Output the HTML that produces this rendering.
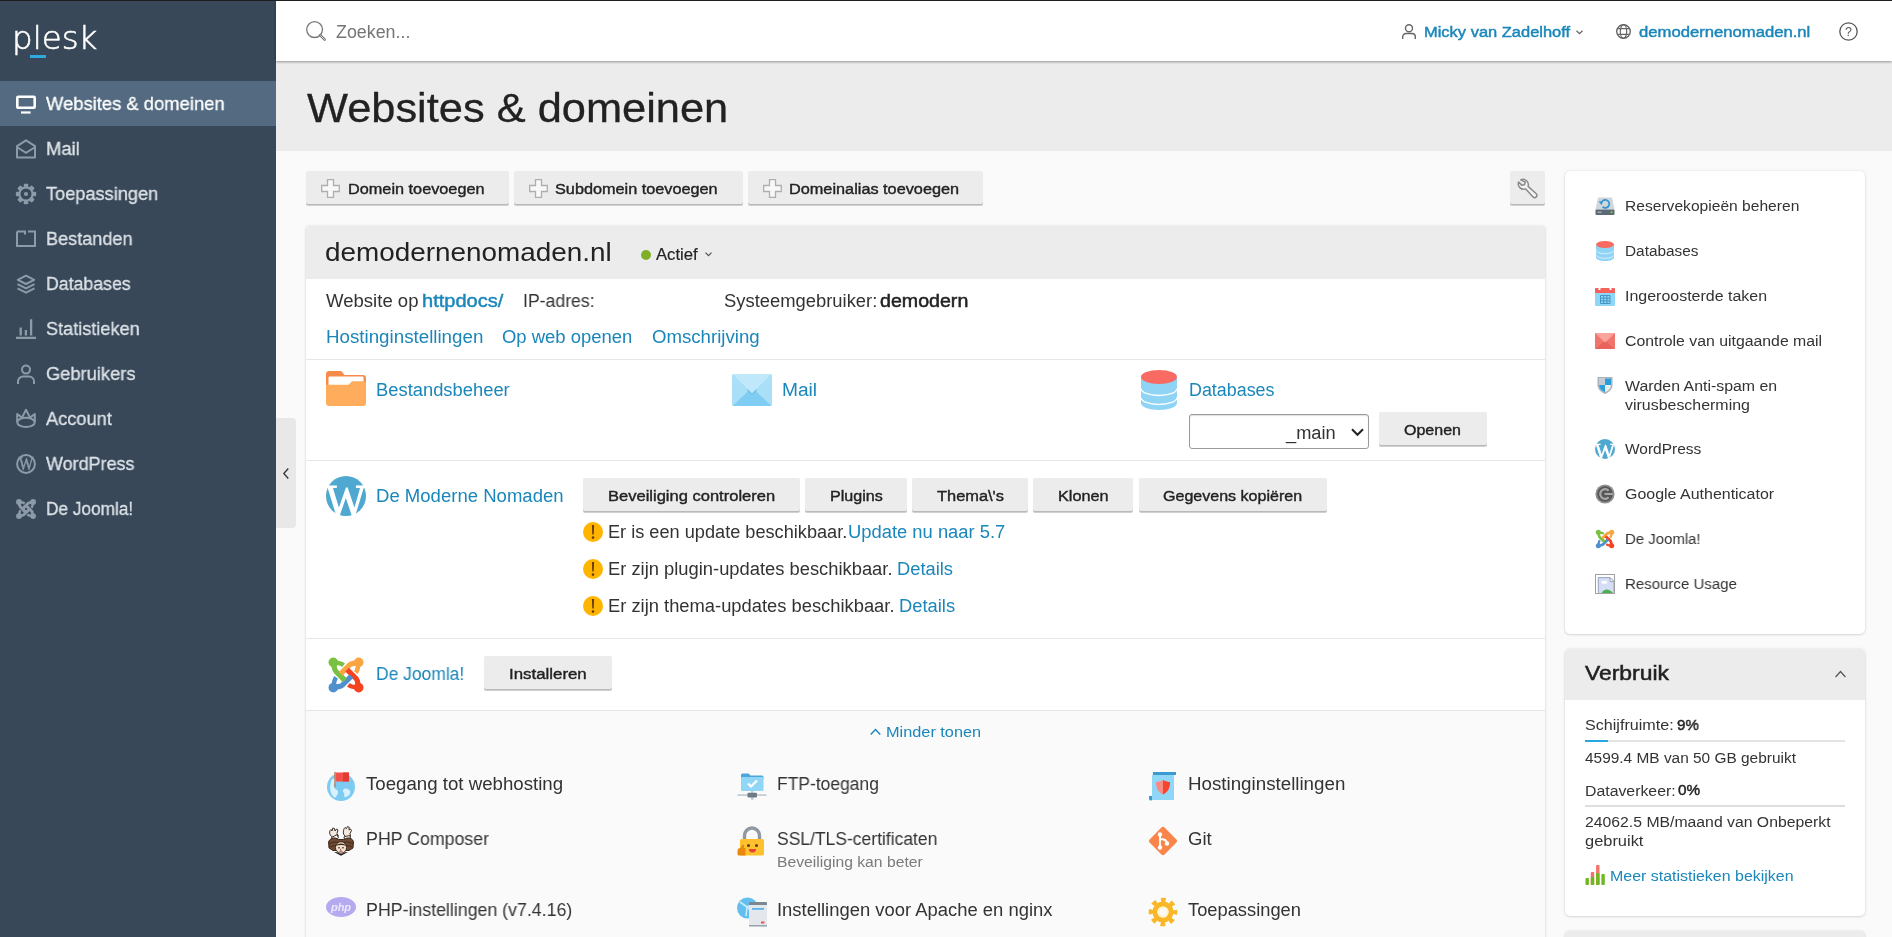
<!DOCTYPE html>
<html lang="nl">
<head>
<meta charset="utf-8">
<title>Websites &amp; domeinen - Plesk</title>
<style>
*{box-sizing:border-box;margin:0;padding:0}
html,body{width:1892px;height:937px;overflow:hidden}
body{font-family:"Liberation Sans","DejaVu Sans",sans-serif;font-size:17.5px;color:#222;background:#fafafa;position:relative}
.abs{position:absolute}
svg{display:block;overflow:visible;will-change:transform}
.tx{position:absolute;white-space:nowrap;display:block;transform-origin:0 50%;will-change:transform}
a{color:#1a86ba;text-decoration:none}
#topline{position:absolute;left:0;top:0;width:1892px;height:1px;background:#1e1e1e;z-index:50}
#side{position:absolute;left:0;top:0;width:276px;height:937px;background:#384859;color:#dde2e7}
.nav{position:absolute;left:0;width:276px;height:45px;color:#dde2e7}
.nav.on{background:#536a80;color:#fff}
.nav svg{color:#8d9aa7}
.nav.on svg{color:#fff}
#handle{position:absolute;left:276px;top:418px;width:20px;height:110px;background:#e8e8e8;border-radius:0 4px 4px 0}
#top{position:absolute;left:276px;top:1px;width:1616px;height:59.5px;background:#fff;box-shadow:0 1px 2.5px rgba(0,0,0,.38);z-index:5}
#titlebar{position:absolute;left:276px;top:60px;width:1616px;height:91px;background:#ececec}
.btn{position:absolute;height:34px;background:#ececec;border-radius:2px;box-shadow:inset 0 -1px 0 #b9b9b9,0 1px 0 #cfcfcf}
.panel{position:absolute;background:#fff;border-radius:3px;box-shadow:0 0 3px rgba(0,0,0,.11),0 1px 2.5px rgba(0,0,0,.1)}
.sep{position:absolute;left:306px;width:1239px;height:1px;background:#e6e6e6}
</style>
</head>
<body>
<div id="topline"></div>
<div id="side">
<span class="tx" id="logo" style="left:12.4px;top:14.5px;font-family:'DejaVu Sans',sans-serif;font-weight:200;font-size:32.5px;line-height:46px;color:#fff;letter-spacing:0.0px;-webkit-text-stroke:0.55px #fff">plesk</span>
<div class="abs" style="left:30px;top:55px;width:15.5px;height:3px;background:#2eaadc"></div>
<div class="nav on" style="top:81px">
<svg class="abs" style="left:16px;top:12.5px;" width="20" height="20" viewBox="0 0 20 20"><rect x="1.3" y="2.8" width="17.4" height="11" rx="1" fill="none" stroke="currentColor" stroke-width="2.6"/><path d="M5 18.5h9.6" fill="none" stroke="currentColor" stroke-width="2.2"/></svg>
<span id="t1" class="tx" style="left:46.1px;top:10.6px;font-size:19.12px;line-height:24px;-webkit-text-stroke:0.3px currentColor;transform:scaleX(0.9626);">Websites &amp; domeinen</span>
</div>
<div class="nav" style="top:126px">
<svg class="abs" style="left:16px;top:13px;" width="20" height="20" viewBox="0 0 20 20"><path d="M1 18.5V7.2L10 1.3l9 5.9V18.5z" fill="none" stroke="currentColor" stroke-width="2" stroke-linejoin="round"/><path d="M1.5 8.5L10 13.8l8.5-5.3" fill="none" stroke="currentColor" stroke-width="2"/></svg>
<span id="t2" class="tx" style="left:46.1px;top:10.6px;font-size:19.12px;line-height:24px;-webkit-text-stroke:0.3px currentColor;transform:scaleX(0.9646);">Mail</span>
</div>
<div class="nav" style="top:171px">
<svg class="abs" style="left:16px;top:12.5px;" width="20" height="20" viewBox="0 0 20 20"><g fill="currentColor"><rect x="7.7" y="-0.2" width="4.6" height="5" rx="1.2" transform="rotate(0 10 10)"/><rect x="7.7" y="-0.2" width="4.6" height="5" rx="1.2" transform="rotate(45 10 10)"/><rect x="7.7" y="-0.2" width="4.6" height="5" rx="1.2" transform="rotate(90 10 10)"/><rect x="7.7" y="-0.2" width="4.6" height="5" rx="1.2" transform="rotate(135 10 10)"/><rect x="7.7" y="-0.2" width="4.6" height="5" rx="1.2" transform="rotate(180 10 10)"/><rect x="7.7" y="-0.2" width="4.6" height="5" rx="1.2" transform="rotate(225 10 10)"/><rect x="7.7" y="-0.2" width="4.6" height="5" rx="1.2" transform="rotate(270 10 10)"/><rect x="7.7" y="-0.2" width="4.6" height="5" rx="1.2" transform="rotate(315 10 10)"/></g><circle cx="10" cy="10" r="7.6" fill="currentColor"/><circle cx="10" cy="10" r="5.5" fill="#384859"/><circle cx="10" cy="10" r="2.1" fill="currentColor"/></svg>
<span id="t3" class="tx" style="left:46.1px;top:10.6px;font-size:19.12px;line-height:24px;-webkit-text-stroke:0.3px currentColor;transform:scaleX(0.9514);">Toepassingen</span>
</div>
<div class="nav" style="top:216px">
<svg class="abs" style="left:16px;top:13px;" width="20" height="20" viewBox="0 0 20 20"><path d="M1 2.5h8v3M1 2.5V17h18V5.5M12 2.5h7v3" fill="none" stroke="currentColor" stroke-width="2"/><path d="M9 5.5h3" stroke="currentColor" stroke-width="2" opacity="0"/></svg>
<span id="t4" class="tx" style="left:46.1px;top:10.6px;font-size:19.12px;line-height:24px;-webkit-text-stroke:0.3px currentColor;transform:scaleX(0.9476);">Bestanden</span>
</div>
<div class="nav" style="top:261px">
<svg class="abs" style="left:16px;top:13px;" width="20" height="20" viewBox="0 0 20 20"><path d="M10 1.6l8.2 4.2L10 10 1.8 5.8z" fill="none" stroke="currentColor" stroke-width="2" stroke-linejoin="round"/><path d="M1.5 10.2L10 14.5l8.5-4.3M1.5 14.3L10 18.6l8.5-4.3" fill="none" stroke="currentColor" stroke-width="2"/></svg>
<span id="t5" class="tx" style="left:46.1px;top:10.6px;font-size:19.12px;line-height:24px;-webkit-text-stroke:0.3px currentColor;transform:scaleX(0.9272);">Databases</span>
</div>
<div class="nav" style="top:306px">
<svg class="abs" style="left:16px;top:13.2px;" width="20" height="20" viewBox="0 0 20 20"><path d="M0 18.800h20M4.700 16.500v-8M9.900 16.500v-5.500M15.100 16.500V0.300" fill="none" stroke="currentColor" stroke-width="2.300"/></svg>
<span id="t6" class="tx" style="left:46.1px;top:10.6px;font-size:19.12px;line-height:24px;-webkit-text-stroke:0.3px currentColor;transform:scaleX(0.9485);">Statistieken</span>
</div>
<div class="nav" style="top:351px">
<svg class="abs" style="left:16px;top:13.4px;" width="20" height="20" viewBox="0 0 20 20"><circle cx="10" cy="5.6" r="4" fill="none" stroke="currentColor" stroke-width="2"/><path d="M2 20v-2.5a5 5 0 0 1 5-5h6a5 5 0 0 1 5 5V20" fill="none" stroke="currentColor" stroke-width="2"/></svg>
<span id="t7" class="tx" style="left:46.1px;top:10.6px;font-size:19.12px;line-height:24px;-webkit-text-stroke:0.3px currentColor;transform:scaleX(0.9576);">Gebruikers</span>
</div>
<div class="nav" style="top:396px">
<svg class="abs" style="left:16px;top:12.3px;" width="20" height="20" viewBox="0 0 20 20"><path d="M1.200 14V6l4.800 3.600L10 1.800l4 7.800L18.800 6v8" fill="none" stroke="currentColor" stroke-width="2" stroke-linejoin="round"/><ellipse cx="10" cy="14.300" rx="8.800" ry="4.600" fill="none" stroke="currentColor" stroke-width="2"/></svg>
<span id="t8" class="tx" style="left:46.1px;top:10.6px;font-size:19.12px;line-height:24px;-webkit-text-stroke:0.3px currentColor;transform:scaleX(0.9543);">Account</span>
</div>
<div class="nav" style="top:441px">
<svg class="abs" style="left:16px;top:13px;" width="20" height="20" viewBox="0 0 20 20"><circle cx="10" cy="10" r="8.900" fill="none" stroke="currentColor" stroke-width="2"/><text x="10" y="16.300" text-anchor="middle" font-family="Liberation Serif,serif" font-weight="400" font-size="19" fill="currentColor" stroke="currentColor" stroke-width="0.500" letter-spacing="0" transform="translate(10 0) scale(0.820 1) translate(-10 0)">W</text></svg>
<span id="t9" class="tx" style="left:46.1px;top:10.6px;font-size:19.12px;line-height:24px;-webkit-text-stroke:0.3px currentColor;transform:scaleX(0.9398);">WordPress</span>
</div>
<div class="nav" style="top:486px">
<svg class="abs" style="left:16px;top:13px;" width="20" height="20" viewBox="0 0 20 20"><g transform="scale(0.5556)"><g fill="none" stroke-width="5.2" stroke-linejoin="round"><path d="M5.30 5.30L11.80 6.40Q13.80 6.80 15.60 8.20" stroke="currentColor" stroke-width="4.42"/><path d="M30.70 5.30L29.60 11.80Q29.20 13.80 27.80 15.60" stroke="currentColor" stroke-width="4.42"/><path d="M30.70 30.70L24.20 29.60Q22.20 29.20 20.40 27.80" stroke="currentColor" stroke-width="4.42"/><path d="M5.30 30.70L6.40 24.20Q6.80 22.20 8.20 20.40" stroke="currentColor" stroke-width="4.42"/><path d="M5.30 5.30L6.60 11.60Q6.90 13.40 8.00 14.50L16.90 23.40" stroke="currentColor"/><path d="M30.70 5.30L24.40 6.60Q22.60 6.90 21.50 8.00L12.60 16.90" stroke="currentColor"/><path d="M30.70 30.70L29.40 24.40Q29.10 22.60 28.00 21.50L19.10 12.60" stroke="currentColor"/><path d="M5.30 30.70L11.60 29.40Q13.40 29.10 14.50 28.00L23.40 19.10" stroke="currentColor"/><path d="M13.50 20.00L16.90 23.40" stroke="currentColor"/></g><circle cx="5.3" cy="5.3" r="5.2" fill="currentColor"/><circle cx="30.7" cy="5.3" r="5.2" fill="currentColor"/><circle cx="30.7" cy="30.7" r="5.2" fill="currentColor"/><circle cx="5.3" cy="30.7" r="5.2" fill="currentColor"/></g></svg>
<span id="t10" class="tx" style="left:46.1px;top:10.6px;font-size:19.12px;line-height:24px;-webkit-text-stroke:0.3px currentColor;transform:scaleX(0.9022);">De Joomla!</span>
</div>
</div>
<div id="handle"><svg class="abs" style="left:6.5px;top:49.5px;" width="6" height="11" viewBox="0 0 6 11"><path d="M5.300 0.500L0.800 5.500l4.500 5" fill="none" stroke="#333" stroke-width="1.300"/></svg></div>
<div id="top"></div>
<div class="abs" style="left:0;top:0;z-index:6">
<svg class="abs" style="left:306px;top:21px;" width="20" height="20" viewBox="0 0 20 20"><circle cx="8.600" cy="8.600" r="7.900" fill="none" stroke="#777" stroke-width="1.300"/><path d="M14.200 14.200l4.500 4.500" stroke="#777" stroke-width="2.600" stroke-linecap="round"/><path d="M14.600 14.600l4 4" stroke="#fff" stroke-width="0.700" stroke-linecap="round"/></svg>
<span id="t11" class="tx" style="left:335.7px;top:21.1px;font-size:17.85px;line-height:23px;color:#757575;transform:scaleX(0.9963);">Zoeken...</span>
<svg class="abs" style="left:1401.5px;top:24px;" width="14" height="15" viewBox="0 0 14 15"><circle cx="7" cy="4.200" r="3.500" fill="none" stroke="#666" stroke-width="1.400"/><path d="M0.700 15v-2.200a3.300 3.300 0 0 1 3.300-3.300h6a3.300 3.300 0 0 1 3.300 3.300V15" fill="none" stroke="#666" stroke-width="1.400"/></svg>
<a id="t12" class="tx" style="left:1423.7px;top:21.9px;font-size:15.10px;line-height:19px;color:#1a86ba;-webkit-text-stroke:0.45px currentColor;transform:scaleX(1.0908);">Micky van Zadelhoff</a>
<svg class="abs" style="left:1576px;top:30.3px;" width="7" height="5" viewBox="0 0 7 5"><path d="M0.500 0.700l3 3 3-3" fill="none" stroke="#666" stroke-width="1.300"/></svg>
<svg class="abs" style="left:1616px;top:24px;" width="15" height="15" viewBox="0 0 15 15"><circle cx="7.500" cy="7.500" r="6.800" fill="none" stroke="#666" stroke-width="1.400"/><ellipse cx="7.500" cy="7.500" rx="3.200" ry="6.800" fill="none" stroke="#666" stroke-width="1.200"/><path d="M1.500 4.600h12M1.500 10.400h12" stroke="#666" stroke-width="1.200"/></svg>
<a id="t13" class="tx" style="left:1638.8px;top:21.9px;font-size:15.10px;line-height:19px;color:#1a86ba;-webkit-text-stroke:0.45px currentColor;transform:scaleX(1.1034);">demodernenomaden.nl</a>
<svg class="abs" style="left:1839px;top:22px;" width="19" height="19" viewBox="0 0 19 19"><circle cx="9.500" cy="9.500" r="8.700" fill="none" stroke="#555" stroke-width="1.300"/><text x="9.500" y="14" text-anchor="middle" font-family="Liberation Sans,sans-serif" font-size="12.500" fill="#555">?</text></svg>
</div>
<div id="titlebar"></div>
<h1 id="t14" class="tx" style="left:306.6px;top:81.6px;font-size:39.98px;line-height:52px;color:#222;font-weight:400;-webkit-text-stroke:0.3px currentColor;transform:scaleX(1.0855);">Websites &amp; domeinen</h1>
<div class="btn" style="left:306px;top:171px;width:202.5px"></div><svg class="abs" style="left:321px;top:179.3px;" width="19" height="19" viewBox="0 0 19 19"><path d="M6.5 0.7h6v5.8h5.8v6h-5.8v5.8h-6v-5.8H0.7v-6h5.8z" fill="#f8f8f8" stroke="#aeaeae" stroke-width="1.3"/></svg><span id="t15" class="tx" style="left:347.8px;top:178.7px;font-size:15.50px;line-height:20px;color:#222;-webkit-text-stroke:0.4px currentColor;transform:scaleX(1.0493);">Domein toevoegen</span>
<div class="btn" style="left:514.3px;top:171px;width:228.3px"></div><svg class="abs" style="left:529px;top:179.3px;" width="19" height="19" viewBox="0 0 19 19"><path d="M6.5 0.7h6v5.8h5.8v6h-5.8v5.8h-6v-5.8H0.7v-6h5.8z" fill="#f8f8f8" stroke="#aeaeae" stroke-width="1.3"/></svg><span id="t16" class="tx" style="left:555.2px;top:178.7px;font-size:15.50px;line-height:20px;color:#222;-webkit-text-stroke:0.4px currentColor;transform:scaleX(1.0484);">Subdomein toevoegen</span>
<div class="btn" style="left:748.3px;top:171px;width:235.2px"></div><svg class="abs" style="left:763px;top:179.3px;" width="19" height="19" viewBox="0 0 19 19"><path d="M6.5 0.7h6v5.8h5.8v6h-5.8v5.8h-6v-5.8H0.7v-6h5.8z" fill="#f8f8f8" stroke="#aeaeae" stroke-width="1.3"/></svg><span id="t17" class="tx" style="left:789.2px;top:178.7px;font-size:15.50px;line-height:20px;color:#222;-webkit-text-stroke:0.4px currentColor;transform:scaleX(1.0502);">Domeinalias toevoegen</span>
<div class="btn" style="left:1510px;top:171px;width:35px"></div>
<svg class="abs" style="left:1517px;top:177.8px;" width="21" height="21" viewBox="0 0 18 18"><path d="M3.2 1.6a4.6 4.6 0 0 1 6.3 5.6l7 6.3a1.9 1.9 0 0 1-2.7 2.7L7.3 9.3A4.6 4.6 0 0 1 1.4 3.4l2.9 2.9 2.2-0.6 0.6-2.2z" fill="#f4f4f4" stroke="#8a8a8a" stroke-width="1.3" stroke-linejoin="round"/></svg>
<div class="panel" style="left:306px;top:226px;width:1239px;height:730px;background:#fafafa"></div>
<div class="abs" style="left:306px;top:226px;width:1239px;height:52.5px;background:#ececec;border-radius:3px 3px 0 0"></div>
<div class="abs" style="left:306px;top:278.5px;width:1239px;height:432px;background:#fff"></div>
<span id="t18" class="tx" style="left:325.3px;top:236.2px;font-size:25.81px;line-height:33px;color:#222;transform:scaleX(1.0802);">demodernenomaden.nl</span>
<div class="abs" style="left:641px;top:249.5px;width:10px;height:10px;background:#80af26;border-radius:50%"></div>
<span id="t19" class="tx" style="left:656.1px;top:245.1px;font-size:15.91px;line-height:20px;color:#222;-webkit-text-stroke:0.15px currentColor;transform:scaleX(1.0475);">Actief</span>
<svg class="abs" style="left:704.6px;top:252.3px;" width="7" height="5" viewBox="0 0 7 5"><path d="M0.500 0.700l3 3 3-3" fill="none" stroke="#555" stroke-width="1.200"/></svg>
<span id="t20" class="tx" style="left:325.6px;top:290.3px;font-size:17.85px;line-height:23px;color:#333;transform:scaleX(1.0400);">Website op</span>
<a id="t21" class="tx" style="left:422.0px;top:289.8px;font-size:17.85px;line-height:23px;color:#1a86ba;-webkit-text-stroke:0.42px currentColor;transform:scaleX(1.1228);">httpdocs/</a>
<span id="t22" class="tx" style="left:523.1px;top:290.3px;font-size:17.85px;line-height:23px;color:#333;transform:scaleX(0.9890);">IP-adres:</span>
<span id="t23" class="tx" style="left:723.5px;top:290.3px;font-size:17.85px;line-height:23px;color:#333;transform:scaleX(1.0306);">Systeemgebruiker:</span>
<b id="t24" class="tx" style="left:880.3px;top:289.7px;font-size:17.85px;line-height:23px;color:#222;font-weight:400;-webkit-text-stroke:0.5px currentColor;transform:scaleX(1.0990);">demodern</b>
<a id="t25" class="tx" style="left:325.6px;top:325.8px;font-size:17.85px;line-height:23px;color:#1a86ba;transform:scaleX(1.0503);">Hostinginstellingen</a>
<a id="t26" class="tx" style="left:502.2px;top:325.8px;font-size:17.85px;line-height:23px;color:#1a86ba;transform:scaleX(1.0342);">Op web openen</a>
<a id="t27" class="tx" style="left:652.3px;top:325.8px;font-size:17.85px;line-height:23px;color:#1a86ba;transform:scaleX(1.0435);">Omschrijving</a>
<div class="sep" style="top:359px"></div>
<svg class="abs" style="left:326px;top:371px;" width="40" height="35" viewBox="0 0 40 35"><path d="M0 3a3 3 0 0 1 3-3h11.500a2 2 0 0 1 1.600 0.800L18.500 4H37a3 3 0 0 1 3 3v10H0z" fill="#f98b4a"/><rect x="2.500" y="5.500" width="35" height="12" rx="1.200" fill="#fff"/><path d="M0 13.800h22.500l3.600-3.600H37a3 3 0 0 1 3 3V32a3 3 0 0 1-3 3H3a3 3 0 0 1-3-3z" fill="#ffad5c"/></svg>
<a id="t28" class="tx" style="left:376.0px;top:378.9px;font-size:17.85px;line-height:23px;color:#1a86ba;transform:scaleX(1.0288);">Bestandsbeheer</a>
<svg class="abs" style="left:732px;top:373.5px;" width="40" height="32" viewBox="0 0 40 32"><rect x="0" y="0" width="40" height="32" rx="1.5" fill="#a9e0f8"/><path d="M0 1l15 15L0 31z" fill="#a9e0f8"/><path d="M40 1L25 16l15 15z" fill="#a9e0f8"/><path d="M0.5 32L20 13.5 39.5 32z" fill="#7fcdf2"/><path d="M14.5 15.8h11L20 20.6z" fill="#6ab9df"/><path d="M0.5 0h39L20 19.5z" fill="#bfe9fb"/></svg>
<a id="t29" class="tx" style="left:782.0px;top:378.9px;font-size:17.85px;line-height:23px;color:#1a86ba;transform:scaleX(1.0732);">Mail</a>
<svg class="abs" style="left:1141px;top:370px;" width="36" height="40" viewBox="0 0 36 40"><path d="M0 7v26c0 3.9 8 7 18 7s18-3.1 18-7V7z" fill="#8fd3f5"/><path d="M0 18.5c0 3.9 8 7 18 7s18-3.1 18-7" fill="none" stroke="#fff" stroke-width="1.3"/><path d="M0 27.5c0 3.9 8 7 18 7s18-3.1 18-7" fill="none" stroke="#fff" stroke-width="1.3"/><ellipse cx="18" cy="7" rx="18" ry="7" fill="#f96a62"/></svg>
<a id="t30" class="tx" style="left:1189.1px;top:378.9px;font-size:17.85px;line-height:23px;color:#1a86ba;transform:scaleX(1.0023);">Databases</a>
<div class="abs" style="left:1189px;top:414px;width:180px;height:35px;background:#fff;border:1px solid #9a9a9a;border-radius:3px;box-shadow:inset 0 1px 1px rgba(0,0,0,.12)"></div>
<span id="t31" class="tx" style="left:1286.0px;top:421.5px;font-size:17.85px;line-height:23px;color:#333;transform:scaleX(1.0227);">_main</span>
<svg class="abs" style="left:1350.5px;top:427.5px;" width="13" height="9" viewBox="0 0 13 9"><path d="M1 1.200l5.500 5.600L12 1.200" fill="none" stroke="#222" stroke-width="2"/></svg>
<div class="btn" style="left:1379.3px;top:412px;width:107.700px"></div>
<span id="t32" class="tx" style="left:1404.3px;top:419.7px;font-size:15.50px;line-height:20px;color:#222;-webkit-text-stroke:0.4px currentColor;transform:scaleX(1.0320);">Openen</span>
<div class="sep" style="top:460px"></div>
<svg class="abs" style="left:326px;top:476px;" width="40" height="40" viewBox="0 0 40 40"><circle cx="20" cy="20" r="20" fill="#4fa8d0"/><text x="0" y="0" text-anchor="middle" font-family="Liberation Serif,serif" font-weight="400" font-size="47" fill="#fff" stroke="#fff" stroke-width="1.100" letter-spacing="0" transform="translate(19.800 40.600) scale(0.900 1)">W</text></svg>
<a id="t33" class="tx" style="left:376.0px;top:484.5px;font-size:17.85px;line-height:23px;color:#1a86ba;transform:scaleX(1.0392);">De Moderne Nomaden</a>
<div class="btn" style="left:583px;top:478px;width:216.8px"></div><span id="t34" class="tx" style="left:608.4px;top:485.7px;font-size:15.50px;line-height:20px;color:#222;-webkit-text-stroke:0.4px currentColor;transform:scaleX(1.0658);">Beveiliging controleren</span>
<div class="btn" style="left:805.2px;top:478px;width:101.7px"></div><span id="t35" class="tx" style="left:829.7px;top:485.7px;font-size:15.50px;line-height:20px;color:#222;-webkit-text-stroke:0.4px currentColor;transform:scaleX(1.0393);">Plugins</span>
<div class="btn" style="left:912px;top:478px;width:115.8px"></div><span id="t36" class="tx" style="left:936.6px;top:485.7px;font-size:15.50px;line-height:20px;color:#222;-webkit-text-stroke:0.4px currentColor;transform:scaleX(1.0581);">Thema\'s</span>
<div class="btn" style="left:1033.2px;top:478px;width:100.1px"></div><span id="t37" class="tx" style="left:1058.1px;top:485.7px;font-size:15.50px;line-height:20px;color:#222;-webkit-text-stroke:0.4px currentColor;transform:scaleX(1.0492);">Klonen</span>
<div class="btn" style="left:1138.6px;top:478px;width:188.4px"></div><span id="t38" class="tx" style="left:1162.6px;top:485.7px;font-size:15.50px;line-height:20px;color:#222;-webkit-text-stroke:0.4px currentColor;transform:scaleX(1.0351);">Gegevens kopi&euml;ren</span>
<svg class="abs" style="left:583px;top:522.2px;" width="20" height="20" viewBox="0 0 20 20"><circle cx="10" cy="10" r="10" fill="#ffb400"/><path d="M8.900 3h2.200l-0.350 9.600h-1.500z" fill="#6b3d00"/><circle cx="10" cy="15.600" r="1.300" fill="#6b3d00"/></svg>
<span id="t39" class="tx" style="left:608.3px;top:521.2px;font-size:17.85px;line-height:23px;color:#333;transform:scaleX(1.0179);">Er is een update beschikbaar.</span>
<a id="t40" class="tx" style="left:847.5px;top:521.2px;font-size:17.85px;line-height:23px;color:#1a86ba;transform:scaleX(1.0297);">Update nu naar 5.7</a>
<svg class="abs" style="left:583px;top:559px;" width="20" height="20" viewBox="0 0 20 20"><circle cx="10" cy="10" r="10" fill="#ffb400"/><path d="M8.900 3h2.200l-0.350 9.600h-1.500z" fill="#6b3d00"/><circle cx="10" cy="15.600" r="1.300" fill="#6b3d00"/></svg>
<span id="t41" class="tx" style="left:608.3px;top:557.7px;font-size:17.85px;line-height:23px;color:#333;transform:scaleX(1.0280);">Er zijn plugin-updates beschikbaar.</span>
<a id="t42" class="tx" style="left:897.2px;top:557.7px;font-size:17.85px;line-height:23px;color:#1a86ba;transform:scaleX(1.0269);">Details</a>
<svg class="abs" style="left:583px;top:596px;" width="20" height="20" viewBox="0 0 20 20"><circle cx="10" cy="10" r="10" fill="#ffb400"/><path d="M8.900 3h2.200l-0.350 9.600h-1.500z" fill="#6b3d00"/><circle cx="10" cy="15.600" r="1.300" fill="#6b3d00"/></svg>
<span id="t43" class="tx" style="left:608.3px;top:594.5px;font-size:17.85px;line-height:23px;color:#333;transform:scaleX(1.0280);">Er zijn thema-updates beschikbaar.</span>
<a id="t44" class="tx" style="left:899.0px;top:594.5px;font-size:17.85px;line-height:23px;color:#1a86ba;transform:scaleX(1.0287);">Details</a>
<div class="sep" style="top:638px"></div>
<svg class="abs" style="left:328.3px;top:656.8px;" width="36" height="36" viewBox="0 0 36 36"><g fill="none" stroke-width="5.3" stroke-linejoin="round"><path d="M5.30 5.30L11.80 6.40Q13.80 6.80 15.60 8.20" stroke="#7ac143" stroke-width="4.505"/><path d="M30.70 5.30L29.60 11.80Q29.20 13.80 27.80 15.60" stroke="#f9a541" stroke-width="4.505"/><path d="M30.70 30.70L24.20 29.60Q22.20 29.20 20.40 27.80" stroke="#f44321" stroke-width="4.505"/><path d="M5.30 30.70L6.40 24.20Q6.80 22.20 8.20 20.40" stroke="#5091cd" stroke-width="4.505"/><path d="M5.30 5.30L6.60 11.60Q6.90 13.40 8.00 14.50L16.90 23.40" stroke="#7ac143"/><path d="M30.70 5.30L24.40 6.60Q22.60 6.90 21.50 8.00L12.60 16.90" stroke="#f9a541"/><path d="M30.70 30.70L29.40 24.40Q29.10 22.60 28.00 21.50L19.10 12.60" stroke="#f44321"/><path d="M5.30 30.70L11.60 29.40Q13.40 29.10 14.50 28.00L23.40 19.10" stroke="#5091cd"/><path d="M13.50 20.00L16.90 23.40" stroke="#7ac143"/></g><circle cx="5.3" cy="5.3" r="4.8" fill="#7ac143"/><circle cx="30.7" cy="5.3" r="4.8" fill="#f9a541"/><circle cx="30.7" cy="30.7" r="4.8" fill="#f44321"/><circle cx="5.3" cy="30.7" r="4.8" fill="#5091cd"/></svg>
<a id="t45" class="tx" style="left:376.0px;top:662.5px;font-size:17.85px;line-height:23px;color:#1a86ba;transform:scaleX(0.9785);">De Joomla!</a>
<div class="btn" style="left:484px;top:656px;width:128px"></div><span id="t46" class="tx" style="left:509.0px;top:663.7px;font-size:15.50px;line-height:20px;color:#222;-webkit-text-stroke:0.4px currentColor;transform:scaleX(1.0870);">Installeren</span>
<div class="sep" style="top:710px"></div>
<svg class="abs" style="left:870px;top:727.2px;" width="11" height="9" viewBox="0 0 11 9"><path d="M0.700 7.500l4.800-5 4.800 5" fill="none" stroke="#1a86ba" stroke-width="1.400"/></svg>
<a id="t47" class="tx" style="left:886.1px;top:721.6px;font-size:15.30px;line-height:20px;color:#1a86ba;transform:scaleX(1.0653);">Minder tonen</a>
<svg class="abs" style="left:326px;top:771px;" width="30" height="30" viewBox="0 0 30 30"><circle cx="15" cy="16" r="14" fill="#7ccbf2"/><path d="M6 8c3-1 5 1 4 3s-3 2-2 5 4 2 4 5-2 4-3 6c-4-3-7-9-3-19zM18 18c2-1 5 0 6 2s-1 5-4 6-1-3-2-4-2-3 0-4z" fill="#d9f1fc"/><rect x="8.2" y="1" width="1.6" height="15" fill="#b98a6a"/><path d="M9.8 1.5h13v9h-13z" fill="#f4514a"/><path d="M17 1.5h6v9h-6z" fill="#e23b34"/></svg>
<span id="t48" class="tx" style="left:366.1px;top:773.2px;font-size:17.85px;line-height:23px;color:#333;transform:scaleX(1.0457);">Toegang tot webhosting</span>
<svg class="abs" style="left:737px;top:771px;" width="30" height="30" viewBox="0 0 30 30"><path d="M4 4a1.5 1.5 0 0 1 1.5-1.500h6l2 2H25a1.500 1.500 0 0 1 1.500 1.500v2H4z" fill="#4aa7d8"/><rect x="4" y="6" width="22.500" height="14" rx="1.2" fill="#8fd6f7"/><path d="M11 12.500l3 3 6-6" fill="none" stroke="#fff" stroke-width="2.2"/><rect x="14" y="20" width="2.500" height="9" fill="#c9ced3"/><rect x="0.500" y="23.200" width="29" height="1.800" fill="#c9ced3"/><rect x="10.500" y="21.800" width="9.500" height="4.600" rx="1" fill="#6d7b87"/></svg>
<span id="t49" class="tx" style="left:776.7px;top:773.2px;font-size:17.85px;line-height:23px;color:#333;transform:scaleX(0.9785);">FTP-toegang</span>
<svg class="abs" style="left:1148px;top:771px;" width="30" height="30" viewBox="0 0 30 30"><path d="M5 1h23v3H5z" fill="#3b9bd0"/><path d="M4 4h22v25H4z" fill="#8fd6f7"/><path d="M1 25h3v4a2 2 0 0 1-3-1z" fill="#3b9bd0"/><path d="M15 9c-2.500 1.500-5 2-7 2 0 6 2 10 7 12.500 5-2.500 7-6.500 7-12.500-2 0-4.500-.5-7-2z" fill="#f98a84"/><path d="M15 9c2.500 1.500 5 2 7 2 0 6-2 10-7 12.500z" fill="#f4462f"/></svg>
<span id="t50" class="tx" style="left:1187.8px;top:773.2px;font-size:17.85px;line-height:23px;color:#333;transform:scaleX(1.0503);">Hostinginstellingen</span>
<svg class="abs" style="left:326px;top:826px;" width="30" height="30" viewBox="0 0 30 30"><path d="M4.500 9.500c-1.500-2.500-1-5 0.500-6l1 1.500 0.800-3 1.700 0.500 0.500 2.500 1.500-2 1.500 1-1 3.500 1.500 2.500-4 2.500z" fill="#f2e8df" stroke="#2a1c14" stroke-width="0.900" stroke-linejoin="round"/><path d="M17.500 8c-0.500-2.500 0-5 1.500-6.500l1.500 1 1-2 1.800 0.800-0.300 2.700 1.500-1 1 1.500-1.500 3 0.500 3-4.500 1z" fill="#f2e8df" stroke="#2a1c14" stroke-width="0.900" stroke-linejoin="round"/><path d="M5.500 11.500l5.500-2.800 1.500 3-5.500 3zM18 10.800l5.800-1.300 0.700 3.300-6 1.200z" fill="#fff" stroke="#2a1c14" stroke-width="0.900" stroke-linejoin="round"/><path d="M2.500 16c1-3 4-4.500 7-4l3 1.500h5l3.500-1.500c3-0.500 6 1 6.500 4l-0.500 6-4 2.500H7l-4-2.500z" fill="#6e4a33" stroke="#2a1c14" stroke-width="0.900" stroke-linejoin="round"/><path d="M3 18c3-2 6-2.500 9-1.500M27 18c-3-2-6-2.500-9-1.500M4 21c2-1 4-1.500 6-1M26 21c-2-1-4-1.500-6-1" fill="none" stroke="#3c2718" stroke-width="0.900"/><ellipse cx="15" cy="21.500" rx="5.600" ry="5.800" fill="#f3dfcd" stroke="#2a1c14" stroke-width="0.900" stroke-linejoin="round"/><path d="M9.600 20c1.500-3.500 9.300-3.500 10.800 0-3-1.200-7.800-1.200-10.800 0z" fill="#3c2718"/><path d="M12 21.800h2M16 21.800h2" stroke="#2a1c14" stroke-width="0.900"/><path d="M14.800 22.500l-0.600 2h1.400" fill="none" stroke="#8a5a4a" stroke-width="0.700"/><path d="M13.300 25.600h3.400" stroke="#b0574a" stroke-width="0.800"/><path d="M8 26l7 3.800 7-3.800-3 0.300-4 2-4-2z" fill="#1c1c1c"/></svg>
<span id="t51" class="tx" style="left:366.1px;top:827.9px;font-size:17.85px;line-height:23px;color:#333;transform:scaleX(0.9949);">PHP Composer</span>
<svg class="abs" style="left:737px;top:826px;" width="30" height="30" viewBox="0 0 30 30"><path d="M7.500 14V9.500a7.500 7.500 0 0 1 15 0V14" fill="none" stroke="#8e99a3" stroke-width="3.400"/><rect x="3" y="13" width="24" height="16.500" rx="1.500" fill="#ffc02e"/><circle cx="11.500" cy="19.500" r="1.500" fill="#5a3a10"/><circle cx="19.500" cy="19.500" r="1.500" fill="#5a3a10"/><path d="M12 23h7a3.500 3.500 0 0 1-7 0z" fill="#e8413a"/><path d="M0.500 25a3 3 0 0 1 3-3l2-3.500c1.500 0 2 1.500 1.200 3.500h1.800v7.500H2a1.500 1.500 0 0 1-1.500-1.500z" fill="#e9880c"/></svg>
<span id="t52" class="tx" style="left:776.7px;top:827.9px;font-size:17.85px;line-height:23px;color:#333;transform:scaleX(0.9797);">SSL/TLS-certificaten</span>
<svg class="abs" style="left:1148px;top:826px;" width="30" height="30" viewBox="0 0 30 30"><rect x="4.400" y="4.400" width="21.200" height="21.200" rx="2.200" fill="#f8854a" transform="rotate(45 15 15)"/><path d="M12 8.500v13M12 13c5 0 7 2 7 4.500" fill="none" stroke="#fff" stroke-width="1.800"/><circle cx="12" cy="8.500" r="2.200" fill="#fff"/><circle cx="12" cy="21.500" r="2.200" fill="#fff"/><circle cx="19" cy="17.500" r="2.200" fill="#fff"/></svg>
<span id="t53" class="tx" style="left:1187.8px;top:827.9px;font-size:17.85px;line-height:23px;color:#333;transform:scaleX(1.0395);">Git</span>
<svg class="abs" style="left:326px;top:892px;" width="30" height="30" viewBox="0 0 30 30"><ellipse cx="15" cy="15" rx="15" ry="10" fill="#b5a9ef"/><text x="15" y="18.700" text-anchor="middle" font-family="Liberation Sans,sans-serif" font-style="italic" font-weight="700" font-size="11" fill="#ece8fc" letter-spacing="0">php</text></svg>
<span id="t54" class="tx" style="left:366.1px;top:898.9px;font-size:17.85px;line-height:23px;color:#333;transform:scaleX(0.9953);">PHP-instellingen (v7.4.16)</span>
<svg class="abs" style="left:737px;top:896.5px;" width="30" height="30" viewBox="0 0 30 30"><circle cx="10.500" cy="11" r="10.500" fill="#62bff0"/><path d="M3 5l7 5-1 9M10 10l9-4M10 10l7 7" fill="none" stroke="#c9ebfb" stroke-width="1.600"/><rect x="12" y="5" width="18" height="24.500" rx="1" fill="#e4e8ec"/><path d="M12 6a1 1 0 0 1 1-1h16a1 1 0 0 1 1 1v2H12z" fill="#7b8791"/><rect x="15" y="11" width="12" height="1.800" fill="#58b4e6"/><rect x="24" y="24.500" width="3.400" height="2" fill="#f4514a"/><rect x="12" y="28" width="18" height="1.500" fill="#9aa5ae"/></svg>
<span id="t55" class="tx" style="left:776.7px;top:898.9px;font-size:17.85px;line-height:23px;color:#333;transform:scaleX(1.0324);">Instellingen voor Apache en nginx</span>
<svg class="abs" style="left:1148px;top:896.5px;" width="30" height="30" viewBox="0 0 30 30"><circle cx="15" cy="15" r="11.300" fill="none" stroke="#f9b727" stroke-width="6" stroke-dasharray="4.400 4.475" stroke-dashoffset="2.200"/><circle cx="15" cy="15" r="8" fill="none" stroke="#f9b727" stroke-width="5"/><circle cx="15" cy="15" r="5.600" fill="#fff3cf"/><circle cx="15" cy="15" r="3.400" fill="#fafafa"/></svg>
<span id="t56" class="tx" style="left:1187.8px;top:898.9px;font-size:17.85px;line-height:23px;color:#333;transform:scaleX(1.0253);">Toepassingen</span>
<span id="t57" class="tx" style="left:777.0px;top:852.4px;font-size:15.30px;line-height:20px;color:#7a7a7a;transform:scaleX(1.0261);">Beveiliging kan beter</span>
<div class="panel" style="left:1565px;top:171px;width:300px;height:463px;border-radius:5px"></div>
<svg class="abs" style="left:1595px;top:195.6px;" width="20" height="20" viewBox="0 0 20 20"><path d="M3 1.500h14l2.500 12h-19z" fill="#cfd6dc"/><rect x="0.500" y="13.500" width="19" height="5.500" rx="1" fill="#5c6a76"/><rect x="2.500" y="15.600" width="4" height="1.300" fill="#aab4bc"/><circle cx="16.500" cy="16.300" r="1" fill="#7ed321"/><path d="M6.300 7.800a4 4 0 1 1 1.300 3" fill="none" stroke="#2f93cf" stroke-width="1.700"/><path d="M3.600 5.200l3.800 0.300-0.600 3.700z" fill="#2f93cf"/></svg>
<span id="t58" class="tx" style="left:1624.9px;top:196.1px;font-size:15.30px;line-height:20px;color:#333;transform:scaleX(1.0198);">Reservekopie&euml;n beheren</span>
<svg class="abs" style="left:1595px;top:240.7px;" width="20" height="20" viewBox="-2 0 40 40"><path d="M0 7v26c0 3.9 8 7 18 7s18-3.1 18-7V7z" fill="#8fd3f5"/><path d="M0 18.5c0 3.9 8 7 18 7s18-3.1 18-7" fill="none" stroke="#fff" stroke-width="1.3"/><path d="M0 27.5c0 3.9 8 7 18 7s18-3.1 18-7" fill="none" stroke="#fff" stroke-width="1.3"/><ellipse cx="18" cy="7" rx="18" ry="7" fill="#f96a62"/></svg>
<span id="t59" class="tx" style="left:1624.9px;top:241.2px;font-size:15.30px;line-height:20px;color:#333;transform:scaleX(1.0039);">Databases</span>
<svg class="abs" style="left:1595px;top:285.7px;" width="20" height="20" viewBox="0 0 20 20"><rect x="0" y="2" width="20" height="18" rx="1" fill="#8fd6f7"/><path d="M0 3a1 1 0 0 1 1-1h18a1 1 0 0 1 1 1v4H0z" fill="#f4625a"/><rect x="3.500" y="0.500" width="2" height="3.500" rx="0.600" fill="#fff"/><rect x="14.500" y="0.500" width="2" height="3.500" rx="0.600" fill="#fff"/><path d="M5.500 9.500h9.500v8h-9.500zM8.700 9.500v8M11.900 9.500v8M5.500 12.200h9.500M5.500 14.900h9.500" fill="none" stroke="#3b8fc0" stroke-width="0.900"/></svg>
<span id="t60" class="tx" style="left:1624.9px;top:286.2px;font-size:15.30px;line-height:20px;color:#333;transform:scaleX(1.0444);">Ingeroosterde taken</span>
<svg class="abs" style="left:1595px;top:330.6px;" width="20" height="20" viewBox="0 0 20 20"><rect x="0" y="2" width="20" height="16" rx="0.800" fill="#f4837a"/><path d="M0 2.500l8 8-8 7.500z" fill="#f0766d"/><path d="M20 2.500l-8 8 8 7.500z" fill="#f0766d"/><path d="M0.300 18L10 9l9.700 9z" fill="#e9645c"/><path d="M0.300 2h19.400L10 11.500z" fill="#f9a49d"/></svg>
<span id="t61" class="tx" style="left:1624.9px;top:331.1px;font-size:15.30px;line-height:20px;color:#333;transform:scaleX(1.0349);">Controle van uitgaande mail</span>
<svg class="abs" style="left:1595px;top:375.3px;" width="20" height="20" viewBox="0 0 20 20"><path d="M2.500 2h15v8c0 4-3 7-7.500 9-4.500-2-7.500-5-7.500-9z" fill="#aab4bd"/><path d="M4 3.500h12v6.500c0 3.200-2.400 5.700-6 7.300-3.600-1.600-6-4.100-6-7.300z" fill="#e9edf0"/><path d="M10 3.500h6V10h-6z" fill="#2b9ddb"/><path d="M4 10h6v7.300c-3.600-1.600-6-4.100-6-7.300z" fill="#2b9ddb"/><path d="M4 3.500h6V10H4z" fill="#c4ccd3"/></svg>
<span id="t62" class="tx" style="left:1624.9px;top:375.8px;font-size:15.30px;line-height:20px;color:#333;transform:scaleX(1.0382);">Warden Anti-spam en</span>
<svg class="abs" style="left:1595px;top:438.5px;" width="20" height="20" viewBox="0 0 40 40"><circle cx="20" cy="20" r="20" fill="#4fa8d0"/><text x="0" y="0" text-anchor="middle" font-family="Liberation Serif,serif" font-weight="400" font-size="47" fill="#fff" stroke="#fff" stroke-width="1.100" letter-spacing="0" transform="translate(19.800 40.600) scale(0.900 1)">W</text></svg>
<span id="t63" class="tx" style="left:1624.9px;top:439.0px;font-size:15.30px;line-height:20px;color:#333;transform:scaleX(1.0126);">WordPress</span>
<svg class="abs" style="left:1595px;top:483.8px;" width="20" height="20" viewBox="0 0 20 20"><circle cx="10" cy="10" r="9.600" fill="#8f8f8f"/><circle cx="10" cy="10" r="7.800" fill="#575757"/><path d="M13.600 6.800a4.800 4.800 0 1 0 0 6.400" fill="none" stroke="#a9a9a9" stroke-width="2.200"/><rect x="9.500" y="9" width="8.300" height="2" fill="#a9a9a9"/></svg>
<span id="t64" class="tx" style="left:1624.9px;top:484.3px;font-size:15.30px;line-height:20px;color:#333;transform:scaleX(1.0437);">Google Authenticator</span>
<svg class="abs" style="left:1595px;top:528.7px;" width="20" height="20" viewBox="-1 -1 38 38"><g fill="none" stroke-width="5.3" stroke-linejoin="round"><path d="M5.30 5.30L11.80 6.40Q13.80 6.80 15.60 8.20" stroke="#7ac143" stroke-width="4.505"/><path d="M30.70 5.30L29.60 11.80Q29.20 13.80 27.80 15.60" stroke="#f9a541" stroke-width="4.505"/><path d="M30.70 30.70L24.20 29.60Q22.20 29.20 20.40 27.80" stroke="#f44321" stroke-width="4.505"/><path d="M5.30 30.70L6.40 24.20Q6.80 22.20 8.20 20.40" stroke="#5091cd" stroke-width="4.505"/><path d="M5.30 5.30L6.60 11.60Q6.90 13.40 8.00 14.50L16.90 23.40" stroke="#7ac143"/><path d="M30.70 5.30L24.40 6.60Q22.60 6.90 21.50 8.00L12.60 16.90" stroke="#f9a541"/><path d="M30.70 30.70L29.40 24.40Q29.10 22.60 28.00 21.50L19.10 12.60" stroke="#f44321"/><path d="M5.30 30.70L11.60 29.40Q13.40 29.10 14.50 28.00L23.40 19.10" stroke="#5091cd"/><path d="M13.50 20.00L16.90 23.40" stroke="#7ac143"/></g><circle cx="5.3" cy="5.3" r="4.8" fill="#7ac143"/><circle cx="30.7" cy="5.3" r="4.8" fill="#f9a541"/><circle cx="30.7" cy="30.7" r="4.8" fill="#f44321"/><circle cx="5.3" cy="30.7" r="4.8" fill="#5091cd"/></svg>
<span id="t65" class="tx" style="left:1624.9px;top:529.2px;font-size:15.30px;line-height:20px;color:#333;transform:scaleX(0.9774);">De Joomla!</span>
<svg class="abs" style="left:1595px;top:573.9px;" width="20" height="20" viewBox="0 0 20 20"><rect x="0.500" y="0.500" width="19" height="19" fill="#fff" stroke="#a0a0a0" stroke-width="1"/><clipPath id="bkc"><rect x="1" y="1" width="18" height="18"/></clipPath><g clip-path="url(#bkc)"><path d="M3.300 3.600h11.700l4 4V22H3.300z" fill="#d5def5" stroke="#8f9ab5" stroke-width="0.900"/><path d="M15 3.600v4h4z" fill="#fff" stroke="#8f9ab5" stroke-width="0.900"/><ellipse cx="9.300" cy="8.300" rx="3" ry="1.500" fill="#fff"/><path d="M6.500 19.500c1-3.500 5-5 7.500-3.500s3.500 2 4 3.500z" fill="#4caf50"/></g></svg>
<span id="t66" class="tx" style="left:1624.9px;top:574.4px;font-size:15.30px;line-height:20px;color:#333;transform:scaleX(0.9815);">Resource Usage</span>
<span id="t67" class="tx" style="left:1624.9px;top:394.8px;font-size:15.30px;line-height:20px;color:#333;transform:scaleX(1.0421);">virusbescherming</span>
<div class="panel" style="left:1565px;top:649px;width:300px;height:267px;border-radius:5px"></div>
<div class="abs" style="left:1565px;top:649px;width:300px;height:51px;background:#ececec;border-radius:5px 5px 0 0"></div>
<span id="t68" class="tx" style="left:1584.6px;top:661.4px;font-size:19.99px;line-height:25px;color:#222;-webkit-text-stroke:0.5px currentColor;transform:scaleX(1.1454);">Verbruik</span>
<svg class="abs" style="left:1834.5px;top:670.3px;" width="11" height="8" viewBox="0 0 11 8"><path d="M0.600 7l4.900-5.500L10.400 7" fill="none" stroke="#555" stroke-width="1.200"/></svg>
<span id="t69" class="tx" style="left:1584.8px;top:715.1px;font-size:15.30px;line-height:20px;color:#333;transform:scaleX(1.0531);">Schijfruimte:</span>
<b id="t70" class="tx" style="left:1676.7px;top:714.6px;font-size:15.30px;line-height:20px;color:#222;font-weight:400;-webkit-text-stroke:0.45px currentColor;transform:scaleX(0.9871);">9%</b>
<div class="abs" style="left:1585px;top:739.5px;width:260px;height:2.8px;background:#e4e4e4"></div>
<div class="abs" style="left:1585px;top:739.5px;width:23px;height:2.8px;background:#28a6e1"></div>
<span id="t71" class="tx" style="left:1584.8px;top:747.6px;font-size:15.30px;line-height:20px;color:#333;transform:scaleX(1.0083);">4599.4 MB van 50 GB gebruikt</span>
<span id="t72" class="tx" style="left:1584.8px;top:780.9px;font-size:15.30px;line-height:20px;color:#333;transform:scaleX(1.0348);">Dataverkeer:</span>
<b id="t73" class="tx" style="left:1678.3px;top:780.4px;font-size:15.30px;line-height:20px;color:#222;font-weight:400;-webkit-text-stroke:0.45px currentColor;transform:scaleX(1.0007);">0%</b>
<div class="abs" style="left:1585px;top:805.2px;width:260px;height:1.8px;background:#dedede"></div>
<span id="t74" class="tx" style="left:1584.8px;top:812.4px;font-size:15.30px;line-height:20px;color:#333;transform:scaleX(1.0311);">24062.5 MB/maand van Onbeperkt</span>
<span id="t75" class="tx" style="left:1584.8px;top:830.9px;font-size:15.30px;line-height:20px;color:#333;transform:scaleX(1.0736);">gebruikt</span>
<svg class="abs" style="left:1585.4px;top:865px;" width="20" height="20" viewBox="0 0 20 20"><rect x="0.500" y="13" width="3.400" height="7" rx="0.800" fill="#6fb81f"/><rect x="5.800" y="7" width="3.400" height="13" rx="0.800" fill="#f0746b"/><rect x="11.100" y="0" width="3.400" height="20" rx="0.800" fill="#f0746b"/><rect x="16.400" y="9" width="3.400" height="11" rx="0.800" fill="#6fb81f"/><rect x="5.800" y="12" width="3.400" height="8" rx="0.800" fill="#6fb81f"/><rect x="11.100" y="8" width="3.400" height="12" rx="0.800" fill="#6fb81f"/></svg>
<a id="t76" class="tx" style="left:1609.6px;top:866.2px;font-size:15.30px;line-height:20px;color:#1a86ba;transform:scaleX(1.0428);">Meer statistieken bekijken</a>
<div class="panel" style="left:1565px;top:931px;width:300px;height:60px;background:#ececec;border-radius:5px"></div>
</body>
</html>
